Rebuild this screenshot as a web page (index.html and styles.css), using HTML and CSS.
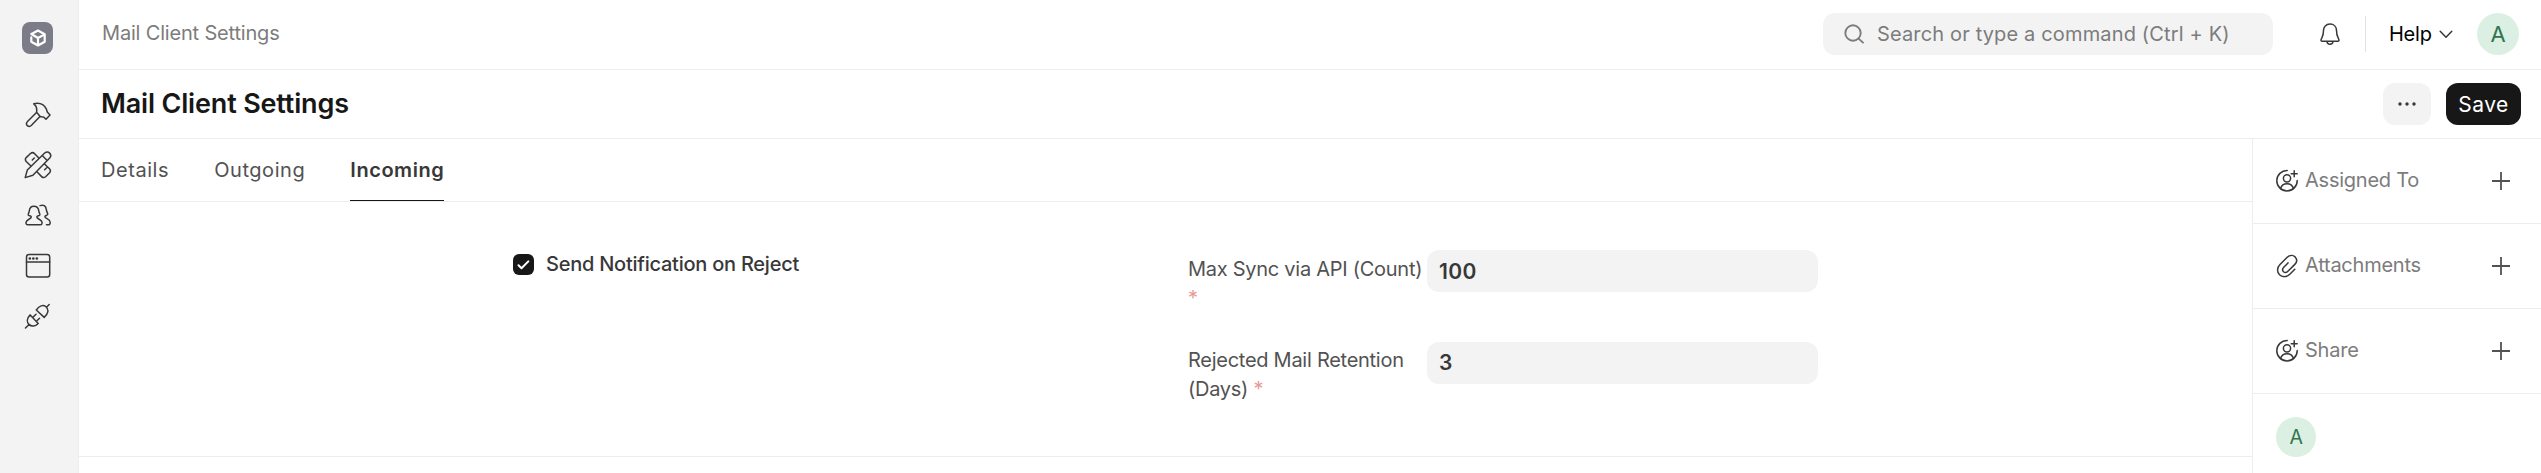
FILE: index.html
```
<!DOCTYPE html>
<html lang="en">
<head>
<meta charset="utf-8">
<title>Mail Client Settings</title>
<link rel="stylesheet" href="styles.css">
</head>
<body>
<svg class="defs" width="0" height="0">
  <symbol id="user-add" viewBox="0 0 24 24">
    <path d="M12.2 1.5A10.2 10.2 0 1 0 22.2 11.6"/>
    <circle cx="12" cy="9.3" r="3.6"/>
    <path d="M5.5 19.5a6.8 6.8 0 0 1 13 0M19.2 1.8v6M16.2 4.8h6"/>
  </symbol>
  <symbol id="plus" viewBox="0 0 18 18"><path d="M9 0v18M0 9h18"/></symbol>
</svg>
<div class="app">
  <aside class="sidebar">
    <div class="logo">
      <svg width="20" height="20" viewBox="0 0 20 20"><path d="M4 5.800 10 2.500l6.700 3.700v7.500L10 17.500l-6.700-3.800V9.400M3.300 6 10 10l6.700-3.600M10 10v7"/></svg>
    </div>
    <nav class="side-nav">
      <svg viewBox="0 0 28 28"><path d="M9.7 2.800C15 1.600 20 3.400 22.400 8.200c.5 1.300.5 2.500 1.300 3.300l2.300 2.500-4 4.200-2.300-2.100c-1.200-.6-2.500-.3-4-.4L7.500 24.300c-2.900 2.900-6.800-.8-4-3.800l9-9c.7-3.800.3-6.700-2.800-8.700zM12.800 11.400l3.400 4"/></svg>
      <svg viewBox="0 0 28 28"><path d="M1.200 26.600 3.300 19 20.700 2c3.600-2.900 7.900 1.600 5 5L8.900 24.300zM18.200 4.500l5 5M15 7.300l-4.300-4.600c-1.300-1.300-2.900-1.300-4.200-.2L2.200 6.600c-1.100 1.300-1.100 2.600 0 3.900l5 4.800M10.300 7l-2 2M20.200 12.700l5.300 5c1.200 1.300 1.200 2.700.1 4l-4 4c-1.300 1.100-2.800 1.100-4-.1l-4.900-5.100M22.700 16.700l-2.100 2"/></svg>
      <svg viewBox="0 0 28 28"><path d="M9.800 5.200c3.200 0 4.700 2 5 4.700.2 1.900 1.300 2.900 1 4-.3.900-2.900.9-3 1.900-.1 2.500 4.900 2.300 5.200 5.300.3 1.700-.4 2.600-1.500 2.600H3.700c-1.200 0-1.900-.9-1.600-2.600.3-3 5.300-2.800 5.200-5.300-.1-1-2.700-1-3-1.900-.3-1.100.8-2.100 1-4 .3-2.700 1.800-4.700 4.500-4.700zM16 4.600c3.400-1.300 6 .2 6.400 4.300.2 2.300 1.700 3.400 1.300 4.500-.3 1-2.700 1.200-2.800 2.200 0 2.300 4.700 1.900 5.200 5.300.4 2.100-.5 3-2.600 2.900h-1"/></svg>
      <svg viewBox="0 0 28 28"><rect x="2.500" y="3.500" width="23.200" height="22.500" rx="2.500"/><path d="M2.500 11h23.200"/><path class="dots" d="M5.800 7.500h.1M9.300 7.500h.1M12.800 7.500h.1"/></svg>
      <svg viewBox="0 0 28 28"><path d="m1.500 27 3.300-3.300M6.200 13.900c-3.200 3.200-3.700 7.100-1.300 9.500 2.700 2.600 6.300 2.200 9.300-1zM9.200 16l2.800-2.800M12.700 20l2.800-2.800M12.300 9c3-4.400 7-5.500 9.700-3.200 3.200 3 2.200 6.800-1.800 10.600zM22.500 6.200l2.700-2.700"/></svg>
    </nav>
  </aside>
  <div class="main">
    <header class="navbar">
      <div class="crumb">Mail Client Settings</div>
      <div class="search">
        <svg width="20" height="20" viewBox="0 0 20 20"><circle cx="9" cy="9" r="7.700"/><path d="m14.600 14.600 4.400 4"/></svg>
        <span>Search or type a command (Ctrl + K)</span>
      </div>
      <svg class="bell" width="22" height="24" viewBox="0 0 22 24"><path d="M11 2c4 0 6.500 2.900 6.500 6.600 0 5 .8 5.800 2.200 8.400.6 1.400.3 2.300-1 2.300H3.300c-1.300 0-1.600-.9-1-2.300 1.400-2.600 2.200-3.400 2.200-8.400C4.500 4.900 7 2 11 2zM8 19.500c.2 3.700 5.800 3.700 6 0"/></svg>
      <div class="divider"></div>
      <div class="help">Help<svg width="14" height="9" viewBox="0 0 14 9"><path d="m1.200 1.200 5.800 6 5.800-6"/></svg></div>
      <div class="avatar">A</div>
    </header>
    <div class="page-head">
      <h1>Mail Client Settings</h1>
      <button class="btn more"><svg width="20" height="6" viewBox="0 0 20 6"><circle cx="3" cy="3" r="1.700"/><circle cx="10" cy="3" r="1.700"/><circle cx="17" cy="3" r="1.700"/></svg></button>
      <button class="btn save">Save</button>
    </div>
    <div class="content">
      <main class="form">
        <div class="tabs">
          <div class="tab">Details</div>
          <div class="tab">Outgoing</div>
          <div class="tab active">Incoming</div>
        </div>
        <section class="fields">
          <div class="check">
            <span class="box"><svg width="13" height="10" viewBox="0 0 13 10"><path d="m1.500 5.200 3 3L11.300 1.400"/></svg></span>
            <span>Send Notification on Reject</span>
          </div>
          <div class="column">
            <div class="field">
              <label>Max Sync via API (Count) <i>*</i></label>
              <div class="input">100</div>
            </div>
            <div class="field">
              <label>Rejected Mail Retention (Days) <i>*</i></label>
              <div class="input">3</div>
            </div>
          </div>
        </section>
      </main>
      <aside class="panel">
        <div class="row"><svg class="icon" viewBox="0 0 24 24"><use href="#user-add"/></svg><span>Assigned To</span><svg class="plus"><use href="#plus"/></svg></div>
        <div class="row"><svg class="icon" viewBox="0 0 24 24"><path d="m19.800 15.200-5 5C11.500 23.500 7 23.200 4.500 20.700 1.700 17.900 2 13.500 5 10.500l7.200-7.200c2.500-2.400 5.800-2.500 7.900-.4 2.100 2.200 1.900 5.300-.5 7.700l-6.700 6.700c-1.400 1.400-3.200 1.500-4.400.4-1.200-1.300-1.200-3 .3-4.500l4.200-4.300"/></svg><span>Attachments</span><svg class="plus"><use href="#plus"/></svg></div>
        <div class="row"><svg class="icon" viewBox="0 0 24 24"><use href="#user-add"/></svg><span>Share</span><svg class="plus"><use href="#plus"/></svg></div>
        <div class="row last"><div class="avatar small">A</div></div>
      </aside>
    </div>
  </div>
</div>
</body>
</html>
```
FILE: styles.css
```
* { box-sizing: border-box; }
body {
  margin: 0;
  font-family: Inter, sans-serif;
  font-size: 20px;
  letter-spacing: -0.24px;
  color: #383838;
  background: #fff;
}
svg { fill: none; stroke: #383838; stroke-width: 1.5; stroke-linecap: round; stroke-linejoin: round; flex: none; }
.defs { display: none; }
.app { display: flex; height: 473px; overflow: hidden; }
.sidebar { width: 79px; flex: none; background: #f3f3f3; border-right: 1px solid #ededed; padding: 22px 0 0 22px; }
.logo { width: 31px; height: 32px; border-radius: 8px; background: #7c7c88; display: flex; align-items: center; justify-content: center; }
.logo svg { stroke: #fff; stroke-width: 2.2; }
.side-nav { display: flex; flex-direction: column; gap: 22px; margin-top: 47px; margin-left: 2px; }
.side-nav svg { width: 28px; height: 28px; }
.side-nav .dots { stroke-width: 2.6; }
.main { flex: 1; min-width: 0; display: flex; flex-direction: column; }
.navbar { height: 70px; flex: none; border-bottom: 1px solid #ededed; display: flex; align-items: center; padding: 0 22px 1px 23px; }
.crumb { flex: 1; color: #7c7c7c; padding-bottom: 3px; letter-spacing: -0.18px; }
.search { width: 450px; height: 42px; border-radius: 12px; background: #f3f3f3; color: #7c7c7c; display: flex; align-items: center; padding-left: 21px; gap: 13px; white-space: nowrap; }
.search span { letter-spacing: 0.15px; }
.search svg { stroke: #7c7c7c; stroke-width: 1.9; }
.bell { margin-left: 46px; }
.divider { width: 1px; height: 36px; background: #e2e2e2; margin-left: 24px; }
.help { width: 64px; margin-left: 23px; display: flex; align-items: center; justify-content: space-between; color: #000; }
.avatar { width: 42px; height: 42px; margin-left: 24px; border-radius: 50%; background: #dcefe3; color: #30754c; display: flex; align-items: center; justify-content: center; font-size: 22px; }
.page-head { height: 69px; flex: none; border-bottom: 1px solid #ededed; display: flex; align-items: center; padding: 0 20px 0 22px; }
h1 { flex: 1; margin: 0; padding-bottom: 2px; font-size: 27px; font-weight: 600; letter-spacing: -0.17px; color: #171717; }
.btn { height: 42px; border: 0; border-radius: 12px; padding: 0; font: inherit; font-size: 21px; display: flex; align-items: center; justify-content: center; }
.more { width: 48px; background: #f3f3f3; }
.more svg { fill: #383838; stroke: none; }
.save { width: 75px; margin-left: 15px; background: #171717; color: #fff; letter-spacing: 0.02em; }
.content { flex: 1; display: flex; min-height: 0; }
.form { flex: 1; display: flex; flex-direction: column; }
.tabs { height: 63px; display: flex; gap: 45px; padding-left: 22px; border-bottom: 1px solid #ededed; color: #525252; font-size: 20px; letter-spacing: 0.56px; }
.tab { display: flex; align-items: center; height: 62px; }
.tab.active { font-weight: 600; color: #383838; border-bottom: 1px solid #171717; padding-top: 1px; }
.fields { height: 255px; border-bottom: 1px solid #ededed; display: flex; padding: 48px 0 0 434px; }
.check { width: 675px; display: flex; align-items: flex-start; gap: 12px; padding-top: 4px; line-height: 21px; font-weight: 500; }
.box { width: 21px; height: 21px; border-radius: 6px; background: #171717; display: flex; align-items: center; justify-content: center; }
.box svg { stroke: #fff; stroke-width: 2; }
.column { width: 630px; display: flex; flex-direction: column; gap: 34px; }
.field { display: flex; align-items: flex-start; }
.field label { width: 239px; height: 58px; padding-top: 5px; line-height: 29px; color: #525252; letter-spacing: -0.27px; }
.field + .field label { padding-top: 4px; }
.field i { font-style: normal; color: #e79a94; }
.input { width: 391px; height: 42px; border-radius: 12px; background: #f3f3f3; padding-left: 12px; line-height: 43px; font-size: 21px; font-weight: 600; letter-spacing: 0.02em; }
.field + .field .input { line-height: 41px; }
.panel { width: 289px; flex: none; border-left: 1px solid #ededed; }
.row { height: 85px; border-bottom: 1px solid #ededed; display: flex; align-items: center; padding: 0 31px 0 22px; color: #7c7c7c; }
.row.last { border: 0; }
.icon { width: 24px; height: 24px; margin-right: 6px; }
.row span { flex: 1; padding-bottom: 2px; }
.plus { width: 18px; height: 18px; overflow: visible; stroke: #525252; stroke-width: 1.8; stroke-linecap: butt; }
.avatar.small { width: 40px; height: 40px; margin-left: 1px; font-size: 19.5px; }
```
